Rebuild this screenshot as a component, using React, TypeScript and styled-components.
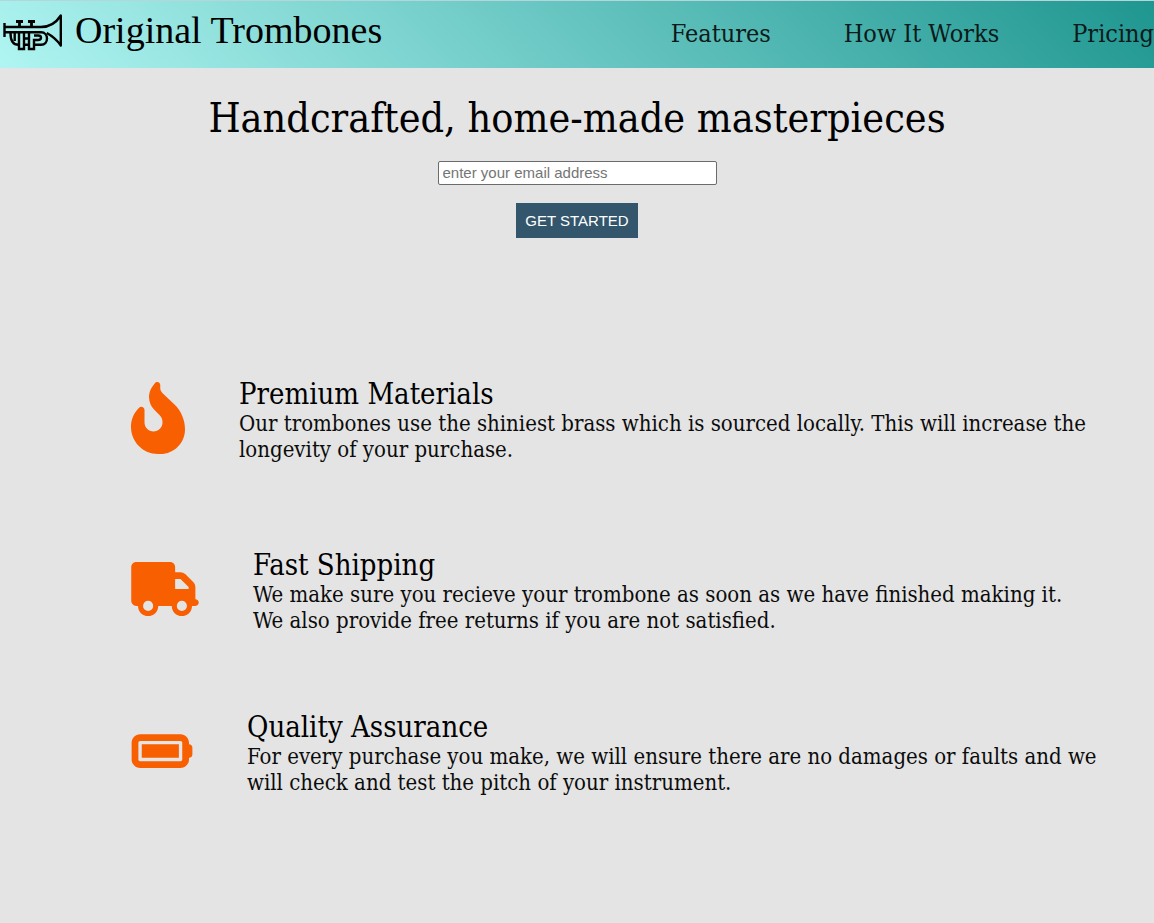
import React from "react";
import styled, { createGlobalStyle } from "styled-components";
import { FaBatteryFull, FaFireFlameCurved, FaTruck } from "react-icons/fa6";

const slab = `"DejaVu Serif Condensed", "DejaVu Serif", serif`;
const sans = `"Liberation Sans", Arial, sans-serif`;

const GlobalStyle = createGlobalStyle`
  *, *::before, *::after { box-sizing: border-box; }
  html, body { min-height: 100vh; }
  body {
    margin: 0;
    background: #e4e4e4;
    color: #000;
    font-family: ${slab};
    overflow-x: hidden;
  }
  h1, h2, p, ul { margin: 0; padding: 0; font-weight: 400; }
`;

const Header = styled.header`
  display: flex;
  justify-content: space-between;
  height: 68px;
  padding-left: 3px;
  overflow: hidden;
  border-top: 1px solid #b4d6d8;
  background: linear-gradient(45deg, #b0f5f2, #1f9690);
`;

const Brand = styled.a`
  display: flex;
  flex: none;
  align-items: flex-start;
  gap: 12px;
  color: #000;
  text-decoration: none;
`;

const Logo = styled.svg`
  width: 60px;
  height: 37px;
  margin-top: 13px;
`;

const BrandName = styled.span`
  font: 38px/44px "Liberation Serif", "Times New Roman", serif;
  margin-top: 7px;
`;

const NavList = styled.ul`
  display: flex;
  flex: none;
  gap: 73px;
  padding-top: 16px;
  list-style: none;
`;

const NavLink = styled.a`
  color: #0b1a1a;
  font-size: 25px;
  line-height: 34px;
  text-decoration: none;
  white-space: nowrap;
`;

const Hero = styled.section`
  display: flex;
  flex-direction: column;
  align-items: center;
  padding-top: 22px;
`;

const HeroTitle = styled.h1`
  font-size: 41px;
  line-height: 56px;
`;

const SignUp = styled.form`
  display: flex;
  flex-direction: column;
  align-items: center;
  gap: 18px;
  margin-top: 15px;
`;

const EmailInput = styled.input`
  width: 279px;
  height: 24px;
  padding: 0 4px 2px;
  border: 1px solid #6b6b6b;
  border-radius: 2px;
  background: #fff;
  font: 15px ${sans};

  &::placeholder { color: #757575; }
`;

const SubmitButton = styled.button`
  height: 35px;
  padding: 0 9px;
  border: 0;
  background: #33566c;
  color: #fff;
  font: 15px ${sans};
  cursor: pointer;
`;

const Features = styled.section`
  margin-top: 139px;
  padding: 0 56px 48px 131px;
`;

const Feature = styled.article<{ $space: number }>`
  display: flex;
  align-items: center;
  gap: 54px;
  margin-bottom: ${(p) => p.$space}px;
`;

const FeatureIcon = styled.span<{ $width: number; $height: number }>`
  display: flex;
  flex: none;
  padding-bottom: 4px;
  color: #f85f00;

  > svg {
    width: ${(p) => p.$width}px;
    height: ${(p) => p.$height}px;
  }
`;

const FeatureTitle = styled.h2`
  font-size: 29px;
  line-height: 34px;
`;

const FeatureText = styled.p`
  color: #0c0c0c;
  font-size: 22px;
  line-height: 26px;
  white-space: pre-line;
`;

const links = ["Features", "How It Works", "Pricing"];

const features = [
  {
    title: "Premium Materials",
    text: "Our trombones use the shiniest brass which is sourced locally. This will increase the longevity of your purchase.",
    Icon: FaFireFlameCurved,
    width: 54,
    height: 72,
    space: 85,
  },
  {
    title: "Fast Shipping",
    text: "We make sure you recieve your trombone as soon as we have finished making it.\nWe also provide free returns if you are not satisfied.",
    Icon: FaTruck,
    width: 68,
    height: 54,
    space: 76,
  },
  {
    title: "Quality Assurance",
    text: "For every purchase you make, we will ensure there are no damages or faults and we will check and test the pitch of your instrument.",
    Icon: FaBatteryFull,
    width: 62,
    height: 54,
    space: 0,
  },
];

function Trumpet() {
  return (
    <Logo viewBox="0 0 60 37" fill="none" stroke="#000" strokeWidth="2.4" aria-hidden="true">
      <path d="M1.500 9v14M1.500 13H38c9 0 15-4 19.800-11.500v30c-3.500-5-8.500-9.500-14-12.500" strokeLinejoin="round" />
      <path d="M1.500 18.300H38c8 0 8 12.500 0 12.500h-7" />
      <path d="M13 7.500h7M25 7.500h7M16.500 7.500v5M28.500 7.500v5" strokeWidth="2.800" />
      <path d="M7.500 19c0 7 2 11.800 8 11.800M11.700 19v8M16 19v16h5V19M21 30.800h5M21 24.500h5M26 19v16h5v-9h4c4 0 4-4.500 0-4.500h-4" />
    </Logo>
  );
}

export default function App() {
  return (
    <>
      <GlobalStyle />
      <Header>
        <Brand href="#">
          <Trumpet />
          <BrandName>Original Trombones</BrandName>
        </Brand>
        <nav>
          <NavList>
            {links.map((label) => (
              <li key={label}>
                <NavLink href="#features">{label}</NavLink>
              </li>
            ))}
          </NavList>
        </nav>
      </Header>
      <main>
        <Hero>
          <HeroTitle>Handcrafted, home-made masterpieces</HeroTitle>
          <SignUp onSubmit={(e) => e.preventDefault()}>
            <EmailInput type="email" aria-label="Email address" placeholder="enter your email address" />
            <SubmitButton type="submit">GET STARTED</SubmitButton>
          </SignUp>
        </Hero>
        <Features id="features">
          {features.map(({ title, text, Icon, width, height, space }) => (
            <Feature key={title} $space={space}>
              <FeatureIcon $width={width} $height={height}>
                <Icon />
              </FeatureIcon>
              <div>
                <FeatureTitle>{title}</FeatureTitle>
                <FeatureText>{text}</FeatureText>
              </div>
            </Feature>
          ))}
        </Features>
      </main>
    </>
  );
}
